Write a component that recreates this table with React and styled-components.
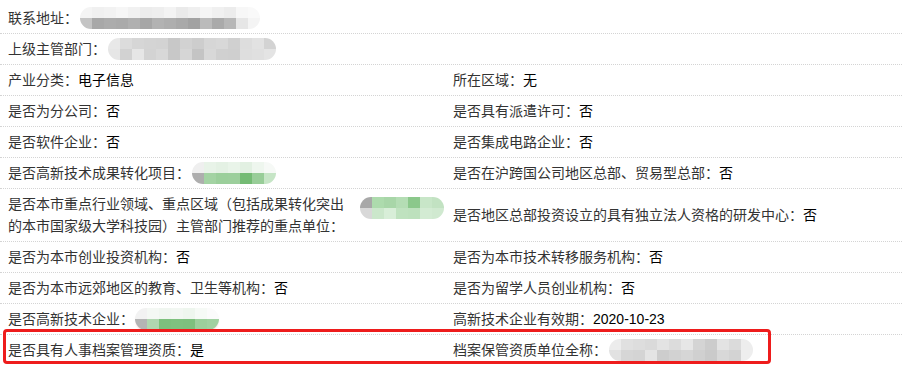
import React from "react";
import styled, { createGlobalStyle } from "styled-components";

const Global = createGlobalStyle`
  body {
    margin: 0;
    background: #fff;
    font-family: "Liberation Sans", "Noto Sans CJK SC", sans-serif;
    font-size: 14px;
  }
`;

const Page = styled.div`
  position: relative;
  width: 902px;
  height: 365px;
  overflow: hidden;
  padding-top: 3px;
  box-sizing: border-box;
`;

const Row = styled.div`
  display: grid;
  grid-template-columns: ${(p) => (p.$full ? "1fr" : "445px 1fr")};
  align-items: center;
  min-height: ${(p) => (p.$tall ? "52px" : "30px")};
  padding-left: 8px;
  border-bottom: 1px dotted #d4d4d4;
`;

const Cell = styled.div`
  display: flex;
  align-items: ${(p) => (p.$top ? "flex-start" : "center")};
  line-height: 22px;
  white-space: nowrap;
`;

const Label = styled.span`
  color: #333;
  white-space: nowrap;
  width: ${(p) => (p.$wide ? "350px" : "auto")};
`;

const Value = styled.span`
  color: #000;
`;

const Mosaic = styled.div`
  display: grid;
  grid-template-columns: repeat(${(p) => p.$cols}, 12px);
  grid-auto-rows: 11px;
  border-radius: 11px;
  overflow: hidden;
  filter: blur(0.6px);
  margin-left: ${(p) => p.$ml || 0}px;
  margin-top: ${(p) => p.$mt || 0}px;
  box-shadow: ${(p) => (p.$pink ? "0 2px 2px -1px rgba(240,150,150,0.6)" : "none")};
`;

const Tile = styled.div`
  background: ${(p) => p.$c};
`;

const Highlight = styled.div`
  position: absolute;
  left: 3px;
  top: 329px;
  width: 768px;
  height: 35px;
  box-sizing: border-box;
  border: 3px solid #ee1c1c;
  border-radius: 4px;
  pointer-events: none;
`;

const grayA = [
  "#f4f4f4", "#f0f0f0", "#f2f2f2", "#f6f6f6", "#f1f1f1", "#ececec", "#eeeeee", "#f3f3f3", "#eaeaea", "#efefef", "#f5f5f5", "#f0f0f0", "#ececec", "#f7f7f7", "#f9f9f9",
  "#c4c4c4", "#a8a8a8", "#acacac", "#aaaaaa", "#b0b0b0", "#a6a6a6", "#b2b2b2", "#aeaeae", "#a9a9a9", "#a2a2a2", "#bbbbbb", "#aaaaaa", "#b7b7b7", "#e6e6e6", "#f4f4f4",
];
const grayB = [
  "#e8e8e8", "#dcdcdc", "#d6d6d6", "#d4d4d4", "#d3d3d3", "#c8c8c8", "#d2d2d2", "#cdcdcd", "#d6d6d6", "#d8d8d8", "#d0d0d0", "#dddddd", "#e2e2e2", "#d3d3d3",
  "#e6e6e6", "#d2d2d2", "#e6e6e6", "#d3d3d3", "#d8d8d8", "#c8c8c8", "#d6d6d6", "#c4c4c4", "#d8d8d8", "#d0d0d0", "#cfcfcf", "#dedede", "#e0e0e0", "#e4e4e4",
];
const greenA = [
  "#efefef", "#e8f3e8", "#e4f1e4", "#e9f4e9", "#e2f0e2", "#eef6ee", "#f6f9f6",
  "#aeaeae", "#a3d3a3", "#9bcf9b", "#9ccf9c", "#74bb74", "#98cd98", "#c6e5c6",
];
const greenB = [
  "#a8a8a8", "#addbad", "#a8d6a8", "#b4ddb4", "#8bc88b", "#c8e6c8", "#c2e2c2",
  "#d8d8d8", "#cbe7cb", "#d8eed8", "#bfe2bf", "#bde1bd", "#d3ebd3", "#d0e9d0",
];
const greenC = [
  "#f2f2f2", "#f4f8f4", "#f0f6f0", "#f2f7f2", "#eef6ee", "#f6faf6", "#fbfbfb",
  "#b4b4b4", "#b0d6b0", "#7dc07d", "#7fc17f", "#7ec07e", "#9ccf9c", "#a1d1a1",
];
const grayC = [
  "#ececec", "#e0e0e0", "#dddddd", "#dadada", "#e3e3e3", "#dcdcdc", "#e6e6e6", "#d4d4d4", "#cccccc", "#e3e3e3", "#dbdbdb", "#ededed",
  "#e2e2e2", "#d6d6d6", "#d4d4d4", "#e4e4e4", "#cdcdcd", "#d2d2d2", "#d6d6d6", "#d0d0d0", "#cacaca", "#d8d8d8", "#d3d3d3", "#eeeeee",
];

function Blur({ colors, cols, ml, mt, pink }) {
  return (
    <Mosaic $cols={cols} $ml={ml} $mt={mt} $pink={pink}>
      {colors.map((c, i) => (
        <Tile key={i} $c={c} />
      ))}
    </Mosaic>
  );
}

function Field({ label, value }) {
  return (
    <Cell>
      <Label>{label}：</Label>
      {value !== undefined && <Value>{value}</Value>}
    </Cell>
  );
}

export default function App() {
  return (
    <Page>
      <Global />
      <Row $full>
        <Cell>
          <Label>联系地址：</Label>
          <Blur colors={grayA} cols={15} ml={2} />
        </Cell>
      </Row>
      <Row $full>
        <Cell>
          <Label>上级主管部门：</Label>
          <Blur colors={grayB} cols={14} ml={2} />
        </Cell>
      </Row>
      <Row>
        <Field label="产业分类" value="电子信息" />
        <Field label="所在区域" value="无" />
      </Row>
      <Row>
        <Field label="是否为分公司" value="否" />
        <Field label="是否具有派遣许可" value="否" />
      </Row>
      <Row>
        <Field label="是否软件企业" value="否" />
        <Field label="是否集成电路企业" value="否" />
      </Row>
      <Row>
        <Cell>
          <Label>是否高新技术成果转化项目：</Label>
          <Blur colors={greenA} cols={7} ml={2} />
        </Cell>
        <Field label="是否在沪跨国公司地区总部、贸易型总部" value="否" />
      </Row>
      <Row $tall>
        <Cell $top>
          <Label $wide>
            是否本市重点行业领域、重点区域（包括成果转化突出
            <br />
            的本市国家级大学科技园）主管部门推荐的重点单位：
          </Label>
          <Blur colors={greenB} cols={7} ml={2} mt={4} />
        </Cell>
        <Field label="是否地区总部投资设立的具有独立法人资格的研发中心" value="否" />
      </Row>
      <Row>
        <Field label="是否为本市创业投资机构" value="否" />
        <Field label="是否为本市技术转移服务机构" value="否" />
      </Row>
      <Row>
        <Field label="是否为本市远郊地区的教育、卫生等机构" value="否" />
        <Field label="是否为留学人员创业机构" value="否" />
      </Row>
      <Row>
        <Cell>
          <Label>是否高新技术企业：</Label>
          <Blur colors={greenC} cols={7} ml={1} pink />
        </Cell>
        <Field label="高新技术企业有效期" value="2020-10-23" />
      </Row>
      <Row>
        <Field label="是否具有人事档案管理资质" value="是" />
        <Cell>
          <Label>档案保管资质单位全称：</Label>
          <Blur colors={grayC} cols={12} ml={2} />
        </Cell>
      </Row>
      <Highlight />
    </Page>
  );
}
